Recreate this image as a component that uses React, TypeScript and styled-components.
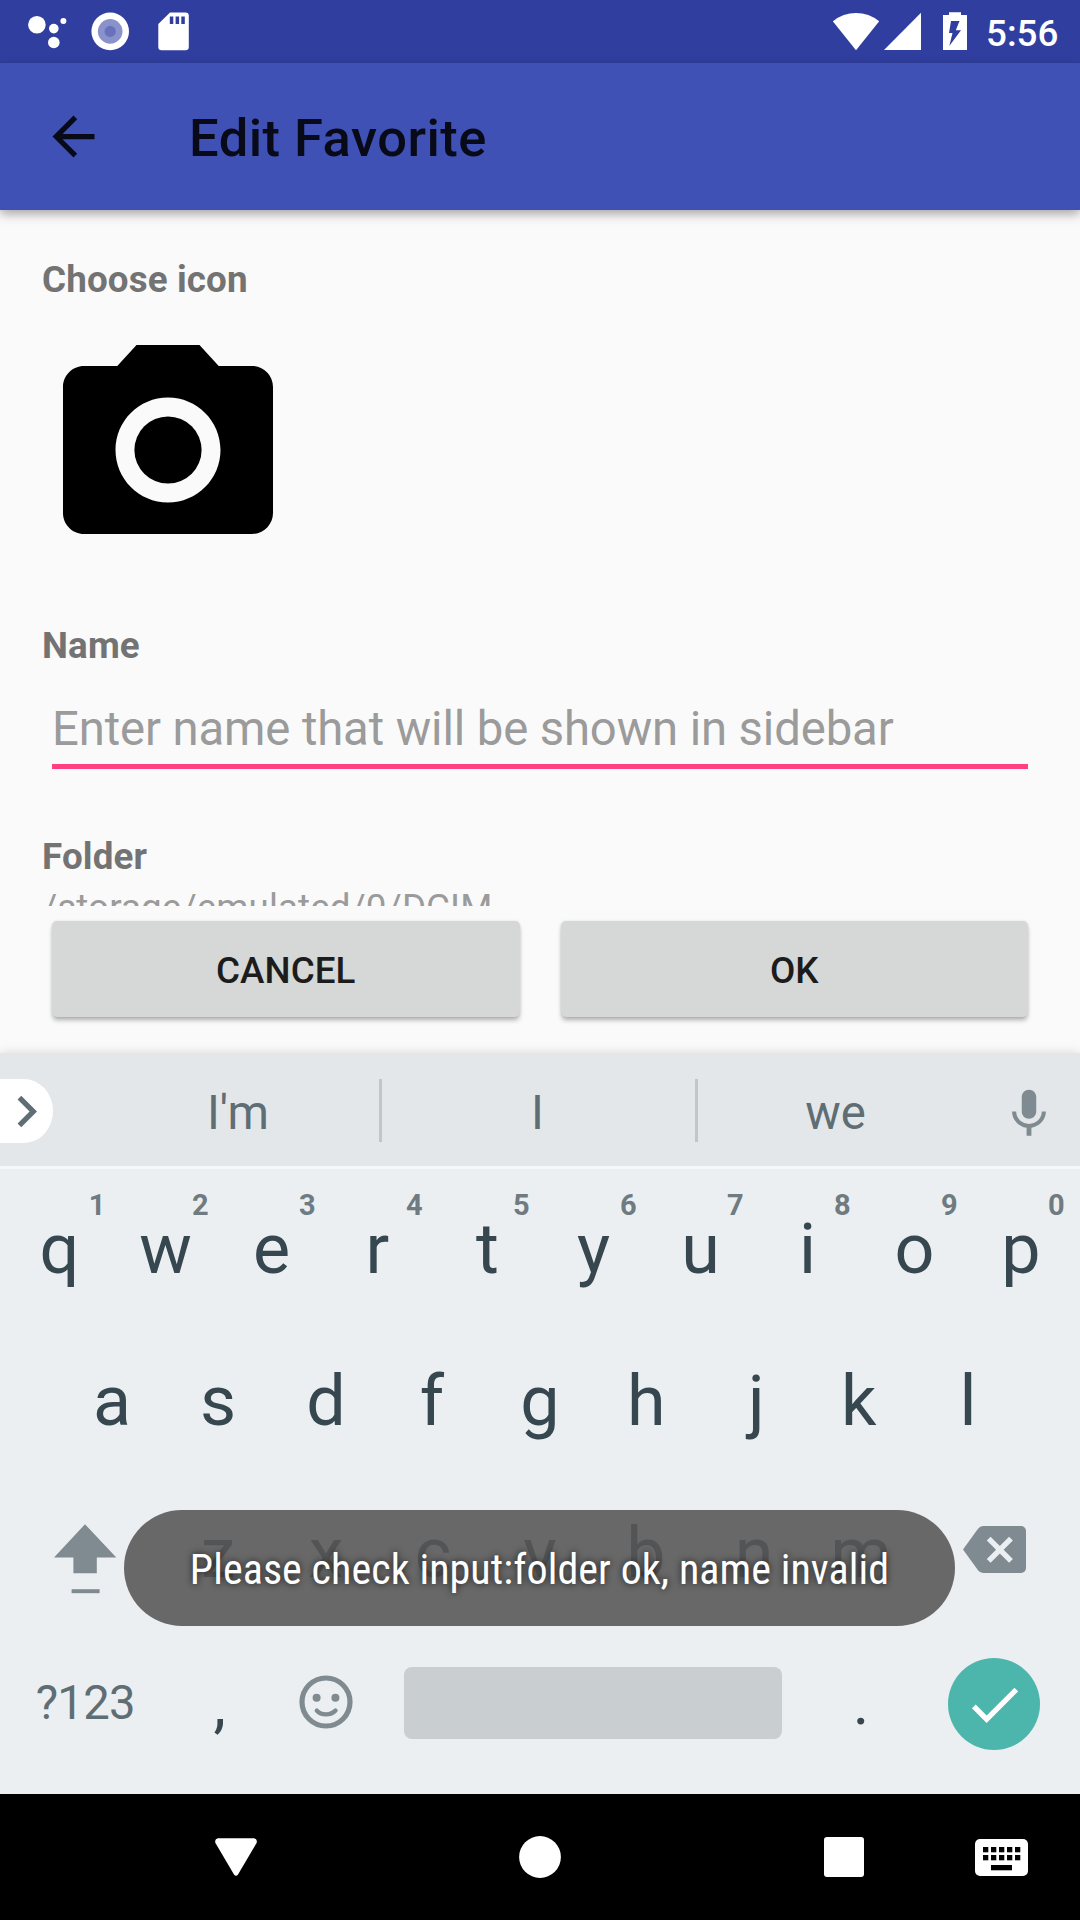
import React from "react";
import styled, { createGlobalStyle } from "styled-components";

const GlobalStyle = createGlobalStyle`
  * { box-sizing: border-box; }
  body { margin: 0; }
  svg { display: block; flex: none; }
`;

const Screen = styled.div`
  position: relative;
  display: flex;
  flex-direction: column;
  width: 1080px;
  height: 1920px;
  overflow: hidden;
  background: #fafafa;
  font-family: Roboto, "Liberation Sans", sans-serif;
`;

const StatusBar = styled.header`
  display: flex;
  align-items: flex-start;
  height: 63px;
  padding: 12px 20px 0 27px;
  background: #303f9f;
`;

const Notifications = styled.div`
  display: flex;
  flex: 1;
`;

const StatusIcon = styled.span<{ $gap: number }>`
  margin-right: ${(p) => p.$gap}px;
`;

const SystemIcons = styled.div`
  display: flex;
`;

const Clock = styled.time`
  width: 74px;
  margin-left: 19px;
  font-size: 36.75px;
  font-weight: 500;
  line-height: 43px;
  color: #fff;
`;

const AppBar = styled.div`
  position: relative;
  z-index: 1;
  display: flex;
  align-items: center;
  height: 147px;
  padding-left: 42px;
  gap: 84px;
  background: #3f51b5;
  box-shadow: 0 4px 10px rgba(0, 0, 0, 0.34);
`;

const Title = styled.h1`
  margin: 3px 0 0;
  font-size: 52.5px;
  font-weight: 500;
  letter-spacing: 0.48px;
  line-height: 62px;
  color: #080a17;
`;

const Form = styled.main`
  display: flex;
  flex-direction: column;
  height: 696px;
  padding: 48px 42px 0;
  overflow: hidden;
`;

const Label = styled.label<{ $before?: number }>`
  flex: none;
  margin-top: ${(p) => p.$before ?? 0}px;
  font-size: 36.75px;
  font-weight: 700;
  letter-spacing: 0.14px;
  line-height: 43px;
  color: #737373;
`;

const IconButton = styled.div`
  margin-top: 23px;
`;

const NameField = styled.div`
  flex: none;
  height: 68px;
  margin: 34px 10px 0;
  border-bottom: 5px solid #ff4081;
  font-size: 47.25px;
  letter-spacing: -0.12px;
  line-height: 56px;
  color: #9b9b9b;
  white-space: nowrap;
`;

const FolderPath = styled.div`
  flex: none;
  margin-top: 8px;
  font-size: 36.75px;
  letter-spacing: 0.1px;
  line-height: 43px;
  color: #9b9b9b;
`;

const Actions = styled.div`
  display: flex;
  gap: 41px;
  height: 147px;
  padding: 15px 52px 36px;
`;

const ActionButton = styled.button`
  flex: 1;
  padding: 2px 0 0;
  border: 0;
  border-radius: 5px;
  background: #d6d7d7;
  box-shadow: 0 4px 5px -1px rgba(0, 0, 0, 0.3), 0 0 3px rgba(0, 0, 0, 0.1);
  font-family: inherit;
  font-size: 36.75px;
  font-weight: 500;
  letter-spacing: 0.1px;
  color: #1c1c1c;
`;

const Keyboard = styled.section`
  display: flex;
  flex-direction: column;
  height: 741px;
  background: #ebeff2;
  box-shadow: 0 0 10px rgba(0, 0, 0, 0.14);
`;

const SuggestionStrip = styled.div`
  display: flex;
  align-items: flex-start;
  height: 116px;
  padding-top: 25px;
  background: #e3e7ea;
  border-bottom: 3px solid #f5f8fa;
`;

const ExpandPill = styled.div`
  width: 53px;
  height: 64px;
  margin: 1px 46px 0 0;
  padding-top: 1px;
  overflow: hidden;
  border-radius: 0 29px 29px 0 / 0 32px 32px 0;
  background: #fff;

  svg { margin-left: -5px; }
`;

const Suggestion = styled.div<{ $width: number }>`
  width: ${(p) => p.$width}px;
  padding: 7px 2px 0 0;
  font-size: 47.25px;
  line-height: 56px;
  text-align: center;
  color: #5f6d74;
`;

const StripDivider = styled.div`
  width: 3px;
  height: 63px;
  margin-top: 1px;
  background: #c2c6c9;
`;

const MicButton = styled.div`
  margin: 7px 0 0 25px;
`;

const Keys = styled.div`
  display: flex;
  flex-direction: column;
  padding: 4px 5px 13px;
`;

const KeyRow = styled.div`
  display: flex;
  justify-content: center;
  height: 152px;
`;

const Key = styled.div<{ $width?: number; $lift?: number }>`
  position: relative;
  display: flex;
  align-items: center;
  justify-content: center;
  width: ${(p) => p.$width ?? 107}px;
  padding-bottom: ${(p) => p.$lift ?? 0}px;
  font-size: 70px;
  line-height: 82px;
  color: #37474f;
`;

const Letter = styled.span<{ $nudge: number }>`
  transform: translateX(${(p) => p.$nudge}px);
`;

const KeyHint = styled.span<{ $right: number }>`
  position: absolute;
  top: 15px;
  right: ${(p) => p.$right}px;
  font-size: 29px;
  font-weight: 700;
  line-height: 34px;
  color: #6f7b81;
`;

const SymbolsLabel = styled.span`
  font-size: 47.25px;
  letter-spacing: -0.7px;
  color: #5f6d74;
`;

const Punctuation = styled.span`
  font-size: 63px;
`;

const SpaceBar = styled.div`
  width: 378px;
  height: 72px;
  margin-right: 2px;
  border-radius: 8px;
  background: #c9ced1;
`;

const EnterKey = styled.div`
  display: flex;
  align-items: center;
  justify-content: center;
  width: 92px;
  height: 92px;
  margin-right: 2px;
  padding-left: 2px;
  border-radius: 50%;
  background: #4db6ac;
`;

const NavBar = styled.nav`
  display: flex;
  align-items: center;
  height: 126px;
  padding-left: 215px;
  background: #000;
`;

const NavIcon = styled.span<{ $after?: number }>`
  margin-right: ${(p) => p.$after ?? 0}px;
`;

const Toast = styled.div`
  position: absolute;
  left: 124px;
  top: 1510px;
  display: flex;
  justify-content: center;
  width: 831px;
  height: 116px;
  padding-top: 35px;
  border-radius: 58px;
  background: rgba(87, 86, 86, 0.883);
`;

const ToastText = styled.span`
  font-family: "Roboto Condensed", Roboto, sans-serif;
  font-size: 42px;
  font-stretch: condensed;
  letter-spacing: 0.08px;
  line-height: 50px;
  white-space: nowrap;
  color: #fff;
  text-shadow: 0 0 7px rgba(0, 0, 0, 0.75);
`;

const AssistantIcon = () => (
  <svg width="40" height="39" viewBox="27 12 40 39" fill="#fff">
    <circle cx="36.9" cy="24.7" r="8.8" />
    <circle cx="53.8" cy="28.6" r="4.8" />
    <circle cx="63.4" cy="21" r="3" />
    <circle cx="53.8" cy="42.5" r="5.8" />
  </svg>
);

const RecordIcon = () => (
  <svg width="38" height="39" viewBox="0 0 38 39">
    <circle cx="19.2" cy="19.4" r="18.8" fill="#fff" />
    <circle cx="19.2" cy="19.4" r="12.3" fill="#8992cb" />
    <circle cx="19.2" cy="19.4" r="5.6" fill="#6872ba" />
  </svg>
);

const SdCardIcon = () => (
  <svg width="31" height="39" viewBox="0 0 31 39">
    <path d="M12 0.4H27.5a3.3 3.3 0 0 1 3.3 3.3V35a3.3 3.3 0 0 1-3.3 3.3H3.6A3.3 3.3 0 0 1 .3 35V12z" fill="#fff" />
    <path d="M11.8 4.5h3.5V12h-3.5zM17.6 4.5h3.5V12h-3.5zM23.3 4.5h3.5V12h-3.5z" fill="#303f9f" />
  </svg>
);

const WifiIcon = () => (
  <svg width="47" height="39" viewBox="0 0 47 39">
    <path d="M-.2 9.3Q10 1 23 1T46.2 9.3L23 38.3z" fill="#fff" />
  </svg>
);

const SignalIcon = () => (
  <svg width="38" height="39" viewBox="0 0 38 39">
    <path d="M0 38L37 .8V38z" fill="#fff" />
  </svg>
);

const BatteryIcon = () => (
  <svg width="24" height="39" viewBox="0 0 24 39">
    <path d="M6 .2h12V3h6v35H0V3h6z" fill="#fff" />
    <path d="M8 9h8.5L12.8 18.2H18L6.3 34 9.5 21H6z" fill="#303f9f" />
  </svg>
);

const ShiftIcon = () => (
  <svg width="63" height="70" viewBox="0 0 63 70" fill="#7f8b91">
    <path d="M31 .3L62.3 33.5H42.8V49.2H19.4V33.500H-.1z" />
    <path d="M17.600 65.200h28v4H17.600z" />
  </svg>
);

const BackspaceIcon = () => (
  <svg width="63" height="47" viewBox="0 0 63 47">
    <path d="M20 0H58a5 5 0 0 1 5 5V42a5 5 0 0 1-5 5H20q-3 0-5-2.7L0 23.5 15 2.7Q17 0 20 0z" fill="#7f8b91" />
    <path d="M25.7 12.6L48 34.9M48 12.6L25.7 34.9" stroke="#ebeff2" strokeWidth="5.4" />
  </svg>
);

const EmojiIcon = () => (
  <svg width="54" height="54" viewBox="0 0 54 54" fill="#7f8b91">
    <circle cx="27" cy="27" r="24" fill="none" stroke="#7f8b91" strokeWidth="5.2" />
    <circle cx="17.6" cy="22.8" r="4" />
    <circle cx="36.4" cy="22.8" r="4" />
    <path d="M17.8 35.6Q21 39.4 27 39.4T36.5 35.6" fill="none" stroke="#7f8b91" strokeWidth="4.4" strokeLinecap="round" />
  </svg>
);

const MaterialIcon = ({ size, color, d }: { size: number; color: string; d: string }) => (
  <svg width={size} height={size} viewBox="0 0 24 24" fill={color}>
    <path d={d} />
  </svg>
);

const BackArrow = () => <MaterialIcon size={63} color="#080a17" d="M20 11H7.83l5.59-5.59L12 4l-8 8 8 8 1.41-1.41L7.83 13H20v-2z" />;
const ChevronIcon = () => <MaterialIcon size={63} color="#5f6d74" d="M10 6L8.59 7.41 13.17 12l-4.58 4.59L10 18l6-6z" />;
const CheckIcon = () => <MaterialIcon size={63} color="#fff" d="M9 16.17L4.83 12l-1.42 1.41L9 19 21 7l-1.41-1.41z" />;
const MicIcon = () => (
  <MaterialIcon
    size={58}
    color="#7f8b91"
    d="M12 14c1.66 0 2.99-1.34 2.99-3L15 5c0-1.66-1.34-3-3-3S9 3.34 9 5v6c0 1.66 1.34 3 3 3zm5.3-3c0 3-2.54 5.1-5.3 5.1S6.7 14 6.7 11H5c0 3.41 2.72 6.23 6 6.72V21h2v-3.28c3.28-.48 6-3.3 6-6.72h-1.7z"
  />
);

const CameraIcon = () => (
  <svg width="252" height="252" viewBox="0 0 24 24">
    <circle cx="12" cy="12" r="3.2" />
    <path d="M9 2L7.17 4H4c-1.1 0-2 .9-2 2v12c0 1.1.9 2 2 2h16c1.1 0 2-.9 2-2V6c0-1.1-.9-2-2-2h-3.17L15 2H9zm3 15c-2.76 0-5-2.24-5-5s2.24-5 5-5 5 2.24 5 5-2.24 5-5 5z" />
  </svg>
);

const DismissIcon = () => (
  <svg width="42" height="38" viewBox="0 0 42 38">
    <path d="M3 .3H39q4 1 2.4 5L23 36.5q-2 2.6-4 0L.6 5.3Q-1 1.3 3 .3z" fill="#fff" />
  </svg>
);

const HomeIcon = () => (
  <svg width="42" height="42" viewBox="0 0 42 42">
    <circle cx="21" cy="21" r="20.9" fill="#fff" />
  </svg>
);

const RecentsIcon = () => (
  <svg width="40" height="40" viewBox="0 0 40 40">
    <rect width="40" height="40" rx="3" fill="#fff" />
  </svg>
);

const KeyboardIcon = () => (
  <svg width="53" height="37" viewBox="0 0 53 37">
    <rect width="53" height="37" rx="5" fill="#fff" />
    {[8, 16].map((y) =>
      [8, 16, 24, 32, 40].map((x) => <rect key={`${x}-${y}`} x={x} y={y} width="5.3" height="5.3" />)
    )}
    <rect x="16" y="26" width="21" height="5.3" />
  </svg>
);

const TOP_ROW = "qwertyuiop".split("");
const HOME_ROW = "asdfghjkl".split("");
const BOTTOM_ROW = "zxcvbnm".split("");

// Letters are centred on their visible shape, not on their advance width.
const OPTICAL_SHIFT: Record<string, number> = {
  q: 1, e: -1, r: -2.2, t: 1, s: -0.8, f: -1, h: -0.8, j: 2.4, k: -2.2, z: -1, b: -1, p: -0.6,
};

const LetterKey = ({ letter, hint }: { letter: string; hint?: number }) => (
  <Key>
    <Letter $nudge={OPTICAL_SHIFT[letter] ?? 0}>{letter}</Letter>
    {hint !== undefined && <KeyHint $right={hint === 1 ? 6.5 : 10.4}>{hint}</KeyHint>}
  </Key>
);

export default function App() {
  return (
    <>
      <GlobalStyle />
      <Screen>
        <StatusBar>
          <Notifications>
            <StatusIcon $gap={24}><AssistantIcon /></StatusIcon>
            <StatusIcon $gap={29}><RecordIcon /></StatusIcon>
            <StatusIcon $gap={0}><SdCardIcon /></StatusIcon>
          </Notifications>
          <SystemIcons>
            <StatusIcon $gap={4}><WifiIcon /></StatusIcon>
            <StatusIcon $gap={21}><SignalIcon /></StatusIcon>
            <BatteryIcon />
          </SystemIcons>
          <Clock>5:56</Clock>
        </StatusBar>
        <AppBar>
          <BackArrow />
          <Title>Edit Favorite</Title>
        </AppBar>
        <Form>
          <Label>Choose icon</Label>
          <IconButton><CameraIcon /></IconButton>
          <Label $before={48}>Name</Label>
          <NameField>Enter name that will be shown in sidebar</NameField>
          <Label $before={66}>Folder</Label>
          <FolderPath>/storage/emulated/0/DCIM</FolderPath>
        </Form>
        <Actions>
          <ActionButton>CANCEL</ActionButton>
          <ActionButton>OK</ActionButton>
        </Actions>
        <Keyboard>
          <SuggestionStrip>
            <ExpandPill><ChevronIcon /></ExpandPill>
            <Suggestion $width={280}>I'm</Suggestion>
            <StripDivider />
            <Suggestion $width={313}>I</Suggestion>
            <StripDivider />
            <Suggestion $width={277}>we</Suggestion>
            <MicButton><MicIcon /></MicButton>
          </SuggestionStrip>
          <Keys>
            <KeyRow>
              {TOP_ROW.map((letter, i) => (
                <LetterKey key={letter} letter={letter} hint={(i + 1) % 10} />
              ))}
            </KeyRow>
            <KeyRow>
              {HOME_ROW.map((letter) => <LetterKey key={letter} letter={letter} />)}
            </KeyRow>
            <KeyRow>
              <Key $width={160.5} $lift={-1}><ShiftRow><ShiftIcon /></ShiftRow></Key>
              {BOTTOM_ROW.map((letter) => <LetterKey key={letter} letter={letter} />)}
              <Key $width={160.5} $lift={7}><BackspaceIcon /></Key>
            </KeyRow>
            <KeyRow>
              <Key $width={160.5} $lift={4}><SymbolsLabel>?123</SymbolsLabel></Key>
              <Key $lift={4}><Letter $nudge={0.8}><Punctuation>,</Punctuation></Letter></Key>
              <Key $lift={6}><EmojiIcon /></Key>
              <Key $width={428} $lift={4}><SpaceBar /></Key>
              <Key $lift={4}><Punctuation>.</Punctuation></Key>
              <Key $width={160.5} $lift={2}><EnterKey><CheckIcon /></EnterKey></Key>
            </KeyRow>
          </Keys>
        </Keyboard>
        <NavBar>
          <NavIcon $after={262}><DismissIcon /></NavIcon>
          <NavIcon $after={263}><HomeIcon /></NavIcon>
          <NavIcon $after={111}><RecentsIcon /></NavIcon>
          <NavIcon><KeyboardIcon /></NavIcon>
        </NavBar>
        <Toast>
          <ToastText>Please check input:folder ok, name invalid</ToastText>
        </Toast>
      </Screen>
    </>
  );
}

const ShiftRow = styled.div`
  margin-top: 12px;
`;
